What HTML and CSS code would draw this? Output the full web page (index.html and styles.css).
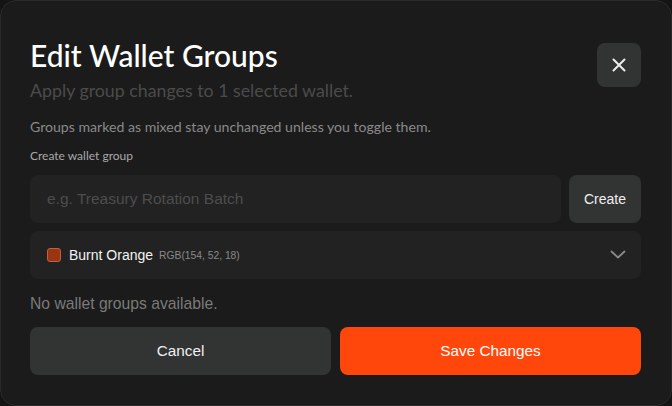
FILE: index.html
```html
<!DOCTYPE html>
<html>
<head>
<meta charset="utf-8">
<link rel="stylesheet" href="styles.css">
</head>
<body>
<div class="dialog">
  <div class="header">
    <div class="titles">
      <h1 class="title">Edit Wallet Groups</h1>
      <p class="subtitle">Apply group changes to 1 selected wallet.</p>
    </div>
    <button class="close" aria-label="Close">
      <svg width="14" height="14" viewBox="0 0 14 14"><path d="M1.5 1.5 L12.5 12.5 M12.5 1.5 L1.5 12.5" stroke="#ececec" stroke-width="2" stroke-linecap="round"/></svg>
    </button>
  </div>
  <p class="note">Groups marked as mixed stay unchanged unless you toggle them.</p>
  <div class="label">Create wallet group</div>
  <div class="create-row">
    <div class="input">e.g. Treasury Rotation Batch</div>
    <button class="btn-create">Create</button>
  </div>
  <div class="select">
    <span class="swatch"></span>
    <span class="color-name">Burnt Orange</span>
    <span class="color-rgb">RGB(154, 52, 18)</span>
    <svg class="chev" width="16" height="10" viewBox="0 0 16 10"><path d="M1.5 1.5 L8 7.5 L14.5 1.5" fill="none" stroke="#8a8a8a" stroke-width="1.8" stroke-linecap="round" stroke-linejoin="round"/></svg>
  </div>
  <p class="empty">No wallet groups available.</p>
  <div class="actions">
    <button class="btn btn-cancel">Cancel</button>
    <button class="btn btn-save">Save Changes</button>
  </div>
</div>
</body>
</html>
```
FILE: styles.css
```css
* { box-sizing: border-box; }
html, body { margin: 0; padding: 0; }
body {
  background: #141414;
  width: 672px;
  height: 406px;
  overflow: hidden;
  font-family: "Liberation Sans", Arial, sans-serif;
}
.dialog {
  width: 672px;
  height: 406px;
  background: #1b1b1b;
  border: 1px solid #2a2a2a;
  border-radius: 16px;
  padding: 38px 30px 0 29px;
}
.header {
  display: flex;
  justify-content: space-between;
  align-items: flex-start;
}
.title {
  margin: 0;
  font-family: Lato, sans-serif;
  font-weight: 500;
  font-size: 30px;
  line-height: 32px;
  color: #ffffff;
}
.subtitle {
  margin: 9px 0 0;
  font-family: Lato, sans-serif;
  font-size: 17.8px;
  line-height: 20px;
  color: #4b4b4b;
}
.close {
  width: 44px;
  height: 44px;
  margin-top: 4px;
  border: none;
  border-radius: 8px;
  background: #323333;
  display: flex;
  align-items: center;
  justify-content: center;
  padding: 0;
}
.note {
  margin: 18px 0 0;
  font-family: Lato, sans-serif;
  font-size: 14.1px;
  line-height: 17px;
  color: #8a8a8a;
}
.label {
  margin-top: 13px;
  font-family: Lato, sans-serif;
  font-size: 12px;
  line-height: 15px;
  color: #a9a9a9;
}
.create-row {
  margin-top: 12px;
  display: flex;
  gap: 8px;
}
.input {
  flex: 1;
  height: 48px;
  border-radius: 8px;
  background: #222222;
  padding-left: 17px;
  display: flex;
  align-items: center;
  font-size: 15.5px;
  color: #4d4d4d;
}
.btn-create {
  width: 72px;
  height: 48px;
  border: none;
  border-radius: 8px;
  background: #323333;
  color: #f0f0f0;
  font-family: "Liberation Sans", Arial, sans-serif;
  font-size: 14px;
  padding: 0;
}
.select {
  margin-top: 8px;
  height: 48px;
  border-radius: 8px;
  background: #222222;
  display: flex;
  align-items: center;
  padding: 0 15px 0 17px;
}
.swatch {
  width: 14px;
  height: 14px;
  border-radius: 3px;
  background: rgb(154, 52, 18);
  border: 1px solid #c0613f;
}
.color-name {
  margin-left: 8px;
  font-size: 14px;
  color: #f2f2f2;
}
.color-rgb {
  margin-left: 6px;
  font-size: 10.3px;
  color: #8a8a8a;
}
.chev { margin-left: auto; }
.empty {
  margin: 16px 0 0;
  font-size: 15.7px;
  line-height: 18px;
  color: #7a7a7a;
}
.actions {
  margin-top: 14px;
  display: grid;
  grid-template-columns: 1fr 1fr;
  gap: 9px;
}
.btn {
  height: 48px;
  border: none;
  border-radius: 8px;
  font-family: "Liberation Sans", Arial, sans-serif;
  font-size: 15.3px;
  padding: 0;
}
.btn-cancel { background: #323333; color: #f0f0f0; }
.btn-save { background: #ff470b; color: #ffffff; }
```
